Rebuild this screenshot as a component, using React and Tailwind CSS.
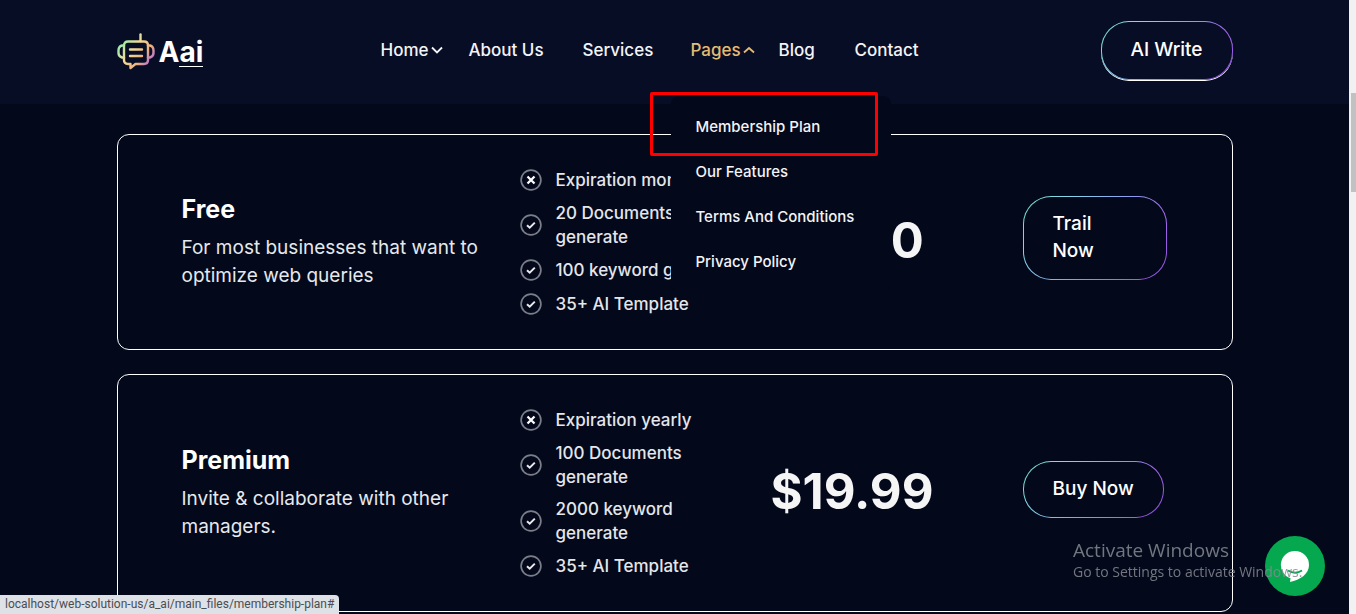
import { useId } from "react";

const gradientBorder =
  "border border-transparent [background:linear-gradient(#03081b,#03081b)_padding-box,linear-gradient(125deg,#6fdcc4_0%,#86d7ea_22%,#8b9ff0_52%,#a56cf0_75%,#8d4bd8_100%)_border-box]";
const headerGradientBorder =
  "border border-transparent [background:linear-gradient(#080d26,#080d26)_padding-box,linear-gradient(125deg,#6fdcc4_0%,#86d7ea_22%,#8b9ff0_52%,#a56cf0_75%,#8d4bd8_100%)_border-box]";

const pages = ["Membership Plan", "Our Features", "Terms And Conditions", "Privacy Policy"];

const plans = [
  {
    name: "Free",
    description: "For most businesses that want to optimize web queries",
    price: "$0.00",
    action: ["Trail", "Now"],
    features: [
      { lines: ["Expiration monthly"], included: false },
      { lines: ["20 Documents", "generate"], included: true },
      { lines: ["100 keyword gen"], included: true },
      { lines: ["35+ AI Template"], included: true },
    ],
  },
  {
    name: "Premium",
    description: "Invite & collaborate with other managers.",
    price: "$19.99",
    action: ["Buy Now"],
    features: [
      { lines: ["Expiration yearly"], included: false },
      { lines: ["100 Documents", "generate"], included: true },
      { lines: ["2000 keyword", "generate"], included: true },
      { lines: ["35+ AI Template"], included: true },
    ],
  },
];

function Logo() {
  const id = useId();
  return (
    <a href="#" className="flex items-center gap-1" aria-label="Aai">
      <svg width="38" height="38" viewBox="0 0 38 38" fill="none" stroke={`url(#${id})`} strokeWidth="2.4" strokeLinejoin="round" strokeLinecap="round">
        <defs>
          <linearGradient id={id} gradientUnits="userSpaceOnUse" x1="2" y1="6" x2="36" y2="32">
            <stop offset="0" stopColor="#7ef0b0" />
            <stop offset="0.4" stopColor="#f0dc96" />
            <stop offset="0.68" stopColor="#f2b27c" />
            <stop offset="1" stopColor="#a45cf2" />
          </linearGradient>
        </defs>
        <path d="M23.500 1.500V8" />
        <path d="M11 8.500H27Q31 8.500 31 12.500V27Q31 31 27 31H18.500L13.500 35V31H11Q7 31 7 27V12.500Q7 8.500 11 8.500Z" />
        <path d="M7 12.500H5Q1.500 13.500 1.500 17.500V20Q1.500 23.500 5 24.500H7" />
        <path d="M31 12.500H33Q36.500 13.500 36.500 17.500V20Q36.500 23.500 33 24.500H31" />
        <path d="M13 16.500L25 16.510M13 23L25 23.010" />
      </svg>
      <span className="flex items-center text-[28px] leading-8 font-bold text-white">
        A<span className="border-b border-white leading-7">ai</span>
      </span>
    </a>
  );
}

function Chevron({ up = false }) {
  return (
    <svg width="12" height="8" viewBox="0 0 12 8" fill="none" stroke="currentColor" strokeWidth="1.800" className="shrink-0" aria-hidden="true">
      <path d={up ? "M1 6.500L6 2L11 6.500" : "M1 1.500L6 6.500L11 1.500"} />
    </svg>
  );
}

function FeatureIcon({ included }) {
  return (
    <svg width="22" height="22" viewBox="0 0 22 22" fill="none" className="shrink-0" aria-hidden="true">
      <circle cx="11" cy="11" r="9.900" stroke="#7b7e89" strokeWidth="1.700" />
      {included ? (
        <path d="M7 11.200L9.700 13.700L14.800 8.600" stroke="#e8eaee" strokeWidth="2" />
      ) : (
        <path d="M7.500 7.500L14.500 14.500M14.500 7.500L7.500 14.500" stroke="#fff" strokeWidth="2.300" />
      )}
    </svg>
  );
}

function PagesMenu() {
  return (
    <ul className="absolute top-[58px] -left-5 z-20 w-[220px] rounded-lg bg-[#03081b] py-2 text-[15px]">
      {pages.map((page, index) => (
        <li key={page} className="relative">
          <a href="#" className="flex h-[45px] items-center px-[25px] whitespace-nowrap text-[#f3f4f6]">
            {page}
          </a>
          {index === 0 && (
            <span className="pointer-events-none absolute -top-3 -left-[21px] h-16 w-[228px] rounded-xs border-3 border-[#ff0000]" />
          )}
        </li>
      ))}
    </ul>
  );
}

function Header() {
  return (
    <header className="bg-[#080d26]">
      <div className="mx-auto flex h-[104px] max-w-[1116px] items-center justify-between pb-1">
        <div className="w-[264px] pt-1">
          <Logo />
        </div>
        <nav className="grid flex-1 grid-cols-[88px_114px_108px_88px_76px_auto] text-[17px] leading-6 font-medium whitespace-nowrap text-[#f3f4f6]">
          <a href="#" className="flex items-center gap-0.5">Home<Chevron /></a>
          <a href="#">About Us</a>
          <a href="#">Services</a>
          <div className="relative">
            <a href="#" className="flex items-center gap-0.5 text-[#e3bc72]">Pages<Chevron up /></a>
            <PagesMenu />
          </div>
          <a href="#">Blog</a>
          <a href="#">Contact</a>
        </nav>
        <button type="button" className={`rounded-[28px] px-[29px] pt-3.5 pb-4 text-[19px] leading-[27px] font-medium text-white shadow-[0_1px_0_#fff] ${headerGradientBorder}`}>
          AI Write
        </button>
      </div>
    </header>
  );
}

function PlanCard({ plan }) {
  return (
    <article className="grid grid-cols-[338px_251px_252px_1fr] items-center rounded-xl border border-white py-8 pl-16">
      <div className="pr-5">
        <h2 className="mb-2.5 text-[25px] leading-[30px] font-bold text-white">{plan.name}</h2>
        <p className="text-[19px] leading-7 text-[#e6e9ec]">{plan.description}</p>
      </div>
      <ul className="flex flex-col gap-2">
        {plan.features.map((feature) => (
          <li key={feature.lines[0]} className="flex min-h-[26px] items-center gap-3.5 text-[17px] font-medium text-[#e3e6ea]">
            <FeatureIcon included={feature.included} />
            <span className="leading-6 whitespace-nowrap">
              {feature.lines.map((line) => (
                <span key={line} className="block">{line}</span>
              ))}
            </span>
          </li>
        ))}
      </ul>
      <p className="w-[162px] pb-0.5 text-center text-[49px] leading-[50px] font-bold text-[#f5f5f5]">{plan.price}</p>
      <div className="pb-2">
        <button type="button" className={`block rounded-[28px] px-[29px] pt-[13px] pb-[15px] text-left text-[19px] leading-[27px] font-medium text-white ${plan.action.length > 1 ? "min-w-36" : ""} ${gradientBorder}`}>
          {plan.action.map((line) => (
            <span key={line} className="block">{line}</span>
          ))}
        </button>
      </div>
    </article>
  );
}

function ScrollTrack() {
  return (
    <div className="flex w-[7px] shrink-0 flex-col bg-[#f1f1f1] pt-[93px] pl-0.5" aria-hidden="true">
      <div className="h-[99px] bg-[#c1c1c1]" />
    </div>
  );
}

export default function App() {
  return (
    <div className="flex min-h-screen bg-[#03081b] font-['Inter',sans-serif]">
      <div className="min-w-0 flex-1">
        <Header />
        <main className="mx-auto flex max-w-[1116px] flex-col gap-6 pt-[30px]">
          {plans.map((plan) => (
            <PlanCard key={plan.name} plan={plan} />
          ))}
        </main>
      </div>
      <ScrollTrack />

      <button type="button" aria-label="Open chat" className="fixed right-[31px] bottom-[18px] flex size-[60px] items-center justify-center rounded-full bg-[#05a84e]">
        <svg width="30" height="32" viewBox="0 0 30 32" fill="#fff" aria-hidden="true">
          <path d="M15 1A14 14 0 0 1 29 15C29 24 20 30 10 32L10.500 28.300A14 14 0 0 1 15 1Z" />
          <path d="M8 20.500Q15 25 22 20.500" fill="none" stroke="#05a84e" strokeWidth="2" />
        </svg>
      </button>
      <div className="pointer-events-none fixed right-12 bottom-8 w-[235px] font-['Open_Sans',sans-serif] whitespace-nowrap text-[#868991]/85">
        <p className="text-[19px] leading-6">Activate Windows</p>
        <p className="text-sm leading-5">Go to Settings to activate Windows.</p>
      </div>
      <div className="fixed bottom-0 left-0 rounded-tr-sm bg-[#dee1e6] px-[5px] font-['Roboto',sans-serif] text-xs leading-[19px] text-[#4a4d52]">
        localhost/web-solution-us/a_ai/main_files/membership-plan#
      </div>
    </div>
  );
}
